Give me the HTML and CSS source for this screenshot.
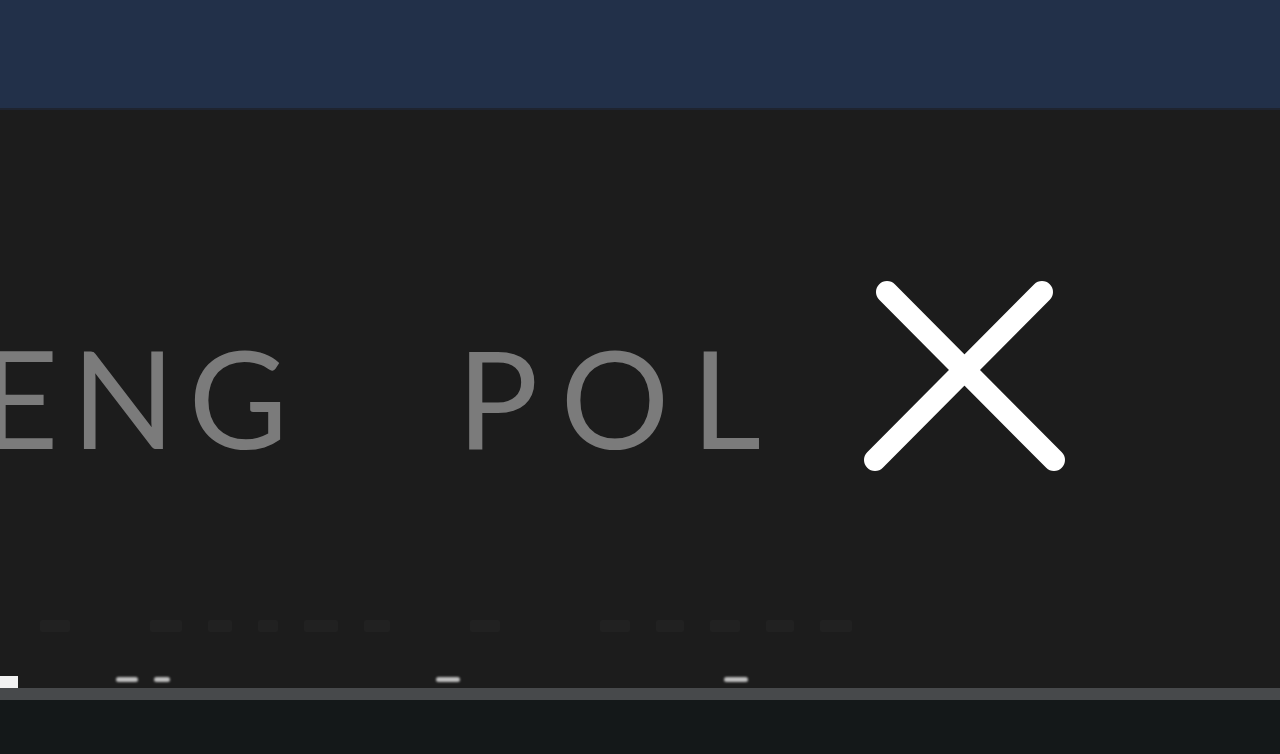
FILE: index.html
```html
<!DOCTYPE html>
<html lang="en">

<head>
    <meta charset="utf-8" />
    <title>Menu</title>
    <link rel="stylesheet" href="styles.css">
</head>

<body>
    <div class="topBar"></div>
    <div class="menuPanel">
        <div class="langRow">
            <span class="langItem langFirst">ENG</span>
            <span class="langItem langSecond">POL</span>
            <button class="closeButton" aria-label="close">
                <svg width="220" height="210" viewBox="0 0 220 210">
                    <path d="M30 22 L197 190 M185 22 L18 190" stroke="#ffffff" stroke-width="22" stroke-linecap="round" fill="none" />
                </svg>
            </button>
        </div>
        <!-- ghost text under the panel -->
        <div class="ghostRow">
            <span class="ghost g1"></span>
            <span class="ghost g2"></span>
            <span class="ghost g3"></span>
            <span class="ghost g4"></span>
            <span class="ghost g5"></span>
            <span class="ghost g6"></span>
            <span class="ghost g7"></span>
            <span class="ghost g8"></span>
            <span class="ghost g9"></span>
            <span class="ghost g10"></span>
            <span class="ghost g11"></span>
            <span class="ghost g12"></span>
        </div>
        <div class="tickRow">
            <span class="tickSquare"></span>
            <span class="tick t1"></span>
            <span class="tick t2"></span>
            <span class="tick t3"></span>
            <span class="tick t4"></span>
        </div>
    </div>
    <div class="lineBar"></div>
    <div class="bottomBar"></div>
</body>

</html>
```

FILE: styles.css
```css
html,
body {
    margin: 0;
    padding: 0;
}

body {
    width: 1280px;
    height: 754px;
    overflow: hidden;
    background-color: #1c1c1c;
    font-family: Lato, "Open Sans", sans-serif;
}

.topBar {
    height: 108px;
    background-color: #223049;
    border-bottom: 2px solid #1f2430;
}

.menuPanel {
    height: 578px;
    background-color: #1c1c1c;
    display: flex;
    flex-direction: column;
}

.langRow {
    display: flex;
    align-items: flex-start;
    height: 490px;
    flex-shrink: 0;
}

.langItem {
    color: #7b7b7b;
    font-size: 136px;
    font-weight: 400;
    line-height: 1;
    margin-top: 219px;
}

.langFirst {
    margin-left: -20px;
    letter-spacing: 13px;
}

.langSecond {
    margin-left: 156px;
    letter-spacing: 22px;
}

.closeButton {
    margin-left: 74px;
    margin-top: 160px;
    padding: 0;
    border: none;
    background: none;
    display: flex;
}

.ghostRow {
    display: flex;
    height: 12px;
    padding-top: 20px;
    flex-shrink: 0;
}

.ghost {
    height: 12px;
    background-color: #212121;
    border-radius: 2px;
    margin-left: 26px;
}

.g1 { width: 30px; margin-left: 40px; }
.g2 { width: 32px; margin-left: 80px; }
.g3 { width: 24px; }
.g4 { width: 20px; }
.g5 { width: 34px; }
.g6 { width: 26px; }
.g7 { width: 30px; margin-left: 80px; }
.g8 { width: 30px; margin-left: 100px; }
.g9 { width: 28px; }
.g10 { width: 30px; }
.g11 { width: 28px; }
.g12 { width: 32px; }

.tickRow {
    display: flex;
    align-items: flex-end;
    height: 56px;
    flex-shrink: 0;
}

.tickSquare {
    width: 18px;
    height: 12px;
    background-color: #f2f2f2;
}

.tick {
    height: 5px;
    border-radius: 3px;
    background-color: #bdbdbd;
    margin-bottom: 6px;
    filter: blur(1px);
}

.t1 { width: 22px; margin-left: 98px; }
.t2 { width: 16px; margin-left: 16px; }
.t3 { width: 24px; margin-left: 266px; }
.t4 { width: 24px; margin-left: 264px; }

.lineBar {
    height: 12px;
    background-color: #47494b;
}

.bottomBar {
    height: 56px;
    background-color: #141819;
}
```
